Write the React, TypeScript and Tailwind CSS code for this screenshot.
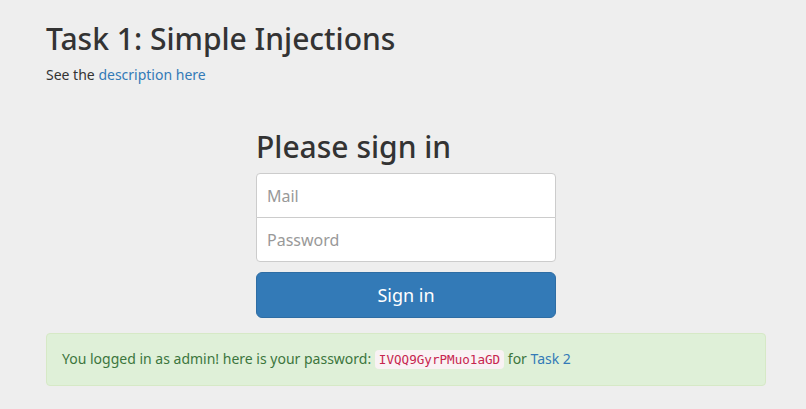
export default function App() {
  return (
    <div className="min-h-screen bg-[#eeeeee] text-[14px] leading-[20px] text-[#333333] [font-family:'Noto_Sans',sans-serif]">
      <div className="ml-[46px] w-[720px] pt-[22px]">
        <h2 className="mb-[10px] text-[30px] leading-[33px] font-medium">Task 1: Simple Injections</h2>
        <p className="mb-[10px]">
          See the <a href="#" className="text-[#337ab7]">description here</a>
        </p>
        <form className="mx-auto w-[330px] p-[15px]" onSubmit={(e) => e.preventDefault()}>
          <h2 className="mt-[20px] mb-[10px] text-[30px] leading-[33px] font-medium">Please sign in</h2>
          <input
            type="email"
            placeholder="Mail"
            className="relative -mb-px block h-[45px] w-full rounded-t-[4px] border border-[#cccccc] bg-white px-[10px] text-[16px] text-[#555555] placeholder:text-[#999999] outline-none"
          />
          <input
            type="password"
            placeholder="Password"
            className="relative mb-[10px] block h-[45px] w-full rounded-b-[4px] border border-[#cccccc] bg-white px-[10px] text-[16px] text-[#555555] placeholder:text-[#999999] outline-none"
          />
          <button
            type="submit"
            className="block h-[46px] w-full rounded-[6px] border border-[#2e6da4] bg-[#337ab7] text-[18px] leading-[24px] text-white"
          >
            Sign in
          </button>
        </form>
        <div className="mb-[20px] rounded-[4px] border border-[#d6e9c6] bg-[#dff0d8] p-[15px] text-[#3c763d]">
          You logged in as admin! here is your password:{" "}
          <code className="rounded-[4px] bg-[#f9f2f4] px-[4px] py-[2px] text-[12.6px] text-[#c7254e] [font-family:'DejaVu_Sans_Mono',monospace]">
            IVQQ9GyrPMuo1aGD
          </code>{" "}
          for <a href="#" className="text-[#337ab7]">Task 2</a>
        </div>
      </div>
    </div>
  );
}
